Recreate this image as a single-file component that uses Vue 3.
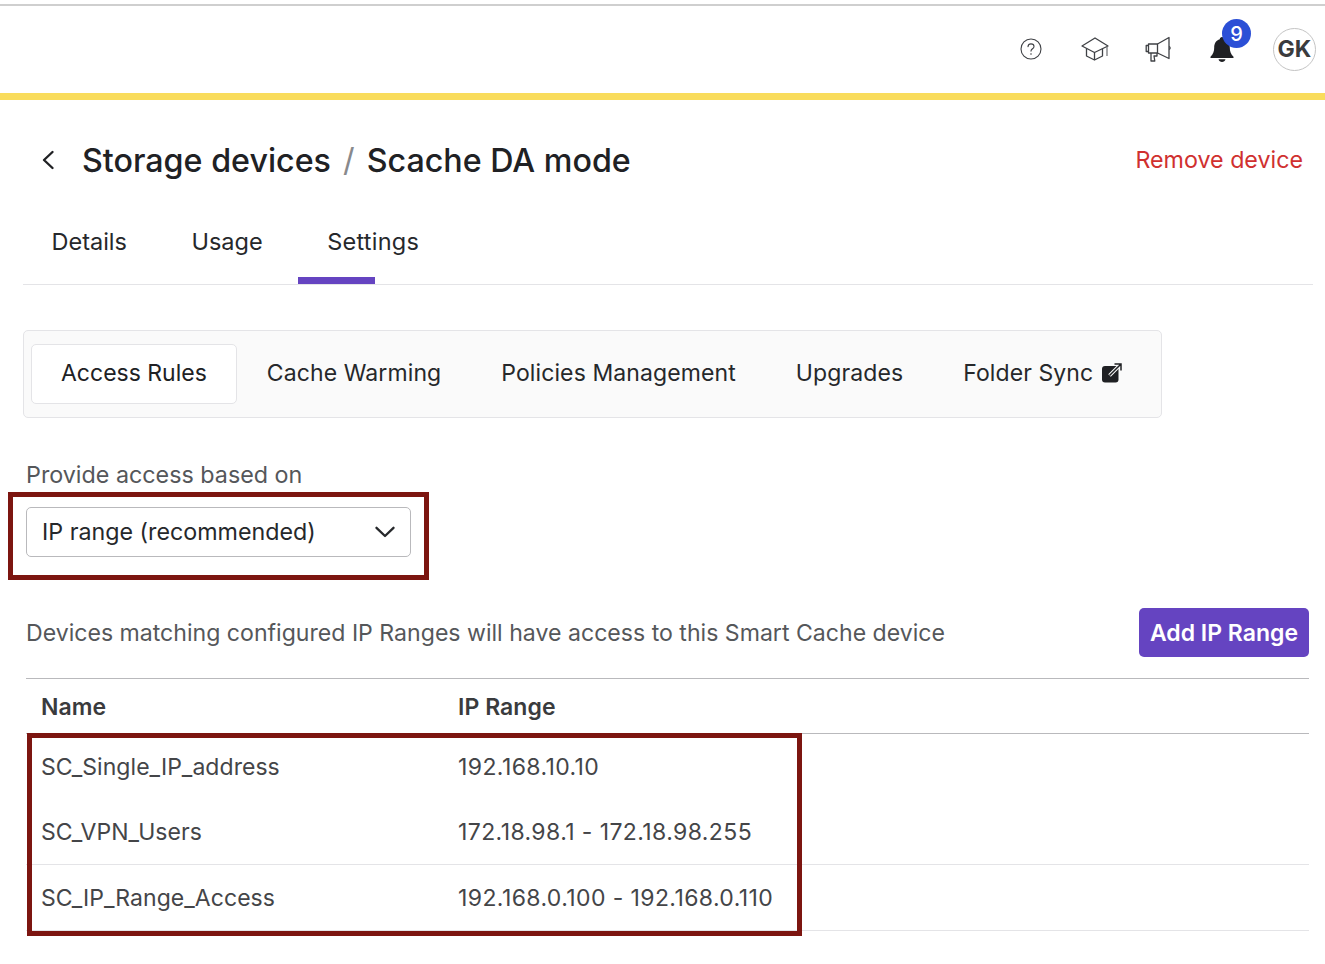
<script setup>
const tabs = [
  { label: 'Details' },
  { label: 'Usage' },
  { label: 'Settings', active: true },
]
const sections = [
  { label: 'Access Rules', active: true },
  { label: 'Cache Warming' },
  { label: 'Policies Management' },
  { label: 'Upgrades' },
  { label: 'Folder Sync', external: true },
]
const rows = [
  { name: 'SC_Single_IP_address', range: '192.168.10.10', plain: true },
  { name: 'SC_VPN_Users', range: '172.18.98.1 - 172.18.98.255' },
  { name: 'SC_IP_Range_Access', range: '192.168.0.100 - 192.168.0.110' },
]
</script>

<template>
  <div class="page">
    <header class="topbar">
      <div class="icons">
        <svg class="ic help" viewBox="0 0 22 22" fill="none" stroke="#3f4145" stroke-width="1.1">
          <circle cx="11" cy="11" r="10" />
          <path d="M8 8.600a3 3 0 0 1 3-2.700c1.800 0 3 1.100 3 2.600 0 2.300-3 2.300-3 4.600" stroke-linecap="round" />
          <circle cx="11" cy="16" r=".8" fill="#3f4145" stroke="none" />
        </svg>
        <svg class="ic cap" viewBox="0 0 28 24" fill="none" stroke="#3f4145" stroke-width="1.300" stroke-linejoin="round">
          <path d="M1 9 14 1 27 9 13.500 15.500Z" />
          <path d="M5.500 11.500V19l8 4 8-4v-7.500" />
          <path d="M13.500 15.500V23" />
          <path d="M26 9.500V19" stroke="#77797c" />
        </svg>
        <svg class="ic mega" viewBox="0 0 26 26" fill="none" stroke="#3f4145" stroke-width="1.300" stroke-linejoin="round">
          <path d="M3.500 8h9v9h-9Z" />
          <path d="M3.500 9.500H1.200v6h2.300" />
          <path d="M12.500 8 24 1.500v21L12.500 17" />
          <path d="M24 10.500c1.500.5 1.500 2.500 0 3" />
          <path d="M6 17v8h3.800l-.8-5h3v-3" />
        </svg>
        <div class="bell-wrap">
          <svg class="ic bell" viewBox="0 0 24 26" fill="#1f2023">
            <path d="M12 1c1.300 0 2.200 1 2.200 2.200C18 4.300 19.800 7.500 19.800 11.500c0 4 1 6.500 3.700 9.200v1.300H.5v-1.300C3.200 18 4.200 15.500 4.200 11.500 4.200 7.500 6 4.300 9.800 3.200 9.800 2 10.700 1 12 1Z" />
            <path d="M8.500 23.300h7C15 25 13.700 26 12 26s-3-1-3.500-2.700Z" />
          </svg>
          <span class="badge">9</span>
        </div>
        <div class="avatar">GK</div>
      </div>
    </header>
    <div class="accent"></div>

    <main class="content">
      <div class="title-row">
        <div class="crumbs">
          <svg class="back" viewBox="0 0 14 20" fill="none" stroke="#202124" stroke-width="2.400" stroke-linecap="round" stroke-linejoin="round">
            <path d="M11.500 2 3 10l8.500 8" />
          </svg>
          <h1 class="title">Storage devices<span class="sep">/</span>Scache DA mode</h1>
        </div>
        <a class="remove">Remove device</a>
      </div>

      <nav class="tabs">
        <span v-for="t in tabs" :key="t.label" class="tab" :class="{ on: t.active }">{{ t.label }}</span>
      </nav>

      <div class="sections">
        <div v-for="s in sections" :key="s.label" class="section" :class="{ active: s.active }">
          <span>{{ s.label }}</span>
          <svg v-if="s.external" class="ext" viewBox="0 0 20 20">
            <rect x="0" y="3" width="16.500" height="16.500" rx="3" fill="#1f2023" />
            <path d="M7.500 12.500 18.500 1.500M12.500 1h6.500v6.500" fill="none" stroke="#fafafa" stroke-width="3.600" />
            <path d="M7.500 12.500 18.500 1.500M12.500 1h6.500v6.500" fill="none" stroke="#1f2023" stroke-width="1.500" />
          </svg>
        </div>
      </div>

      <div class="body">
        <label class="field-label">Provide access based on</label>
        <div class="select-wrap">
          <div class="select">
            <span>IP range (recommended)</span>
            <svg class="chev" viewBox="0 0 20 12" fill="none" stroke="#26282b" stroke-width="2.300" stroke-linecap="round" stroke-linejoin="round">
              <path d="M1.500 1.800 10 10l8.500-8.200" />
            </svg>
          </div>
          <div class="mark mark-select"></div>
        </div>

        <div class="desc-row">
          <p class="desc">Devices matching configured IP Ranges will have access to this Smart Cache device</p>
          <button class="add">Add IP Range</button>
        </div>

        <div class="table">
          <div class="row head">
            <div class="c1">Name</div>
            <div class="c2">IP Range</div>
          </div>
          <div v-for="r in rows" :key="r.name" class="row" :class="{ plain: r.plain }">
            <div class="c1">{{ r.name }}</div>
            <div class="c2 num">{{ r.range }}</div>
          </div>
          <div class="mark mark-table"></div>
        </div>
      </div>
    </main>
  </div>
</template>

<style>
html, body { margin: 0; background: #fff; }
</style>

<style scoped>
.page {
  width: 1325px;
  height: 964px;
  overflow: hidden;
  font-family: Inter, "Liberation Sans", sans-serif;
  color: #202124;
  background: #fff;
  box-sizing: border-box;
  padding-top: 4px;
}
.topbar {
  height: 89px;
  box-sizing: border-box;
  border-top: 2px solid #cfcfcf;
  display: flex;
  justify-content: flex-end;
  align-items: center;
  padding-bottom: 1px;
}
.accent { height: 7px; background: #f9dc5c; }
.icons {
  display: flex;
  align-items: center;
  margin-right: 9px;
}
.ic { display: block; }
.help { width: 22px; height: 22px; margin-right: 39px; }
.cap { width: 28px; height: 24px; margin-right: 36px; }
.mega { width: 26px; height: 26px; margin-right: 39px; }
.bell-wrap { position: relative; width: 24px; height: 26px; margin-right: 39px; }
.bell { width: 24px; height: 26px; }
.badge {
  position: absolute;
  left: 12px;
  top: -17px;
  width: 29px;
  height: 29px;
  border-radius: 50%;
  background: #2b4fd6;
  color: #fff;
  font-size: 20px;
  font-weight: 500;
  display: flex;
  align-items: center;
  justify-content: center;
}
.avatar {
  width: 41px;
  height: 41px;
  border: 1px solid #c4c4c4;
  border-radius: 50%;
  color: #3a3b3d;
  font-size: 23px;
  font-weight: 700;
  display: flex;
  align-items: center;
  justify-content: center;
}
.content { padding: 30px 12px 0 23px; }
.title-row {
  height: 60px;
  display: flex;
  align-items: center;
  justify-content: space-between;
  padding-left: 18px;
  padding-right: 10px;
}
.crumbs { display: flex; align-items: center; }
.back { width: 14px; height: 20px; margin-right: 27px; display: block; }
.title {
  margin: 2px 0 0;
  font-size: 32.250px;
  line-height: 40px;
  font-weight: 500;
  color: #202124;
}
.sep { color: #88898c; font-weight: 400; margin: 0 12px; }
.remove { font-size: 23.250px; color: #d0302f; margin-top: -2px; }
.tabs {
  margin-top: 10px;
  height: 84px;
  border-bottom: 1px solid #e4e4e7;
  display: flex;
  align-items: center;
  padding-left: 28.500px;
  gap: 64.500px;
}
.tab { position: relative; font-size: 23.500px; color: #26282b; line-height: 30px; }
.tab.on { letter-spacing: 0.25px; }
.tab.on::after {
  content: "";
  position: absolute;
  left: -29px;
  width: 77px;
  top: 50px;
  height: 7px;
  background: #6544c1;
}
.sections {
  margin-top: 45px;
  width: 1139px;
  height: 88px;
  box-sizing: border-box;
  background: #fafafa;
  border: 1px solid #e4e4e7;
  border-radius: 5px;
  padding: 13px 7px;
  display: flex;
  align-items: stretch;
}
.section {
  display: flex;
  align-items: center;
  padding: 0 29px 2px;
  font-size: 23px;
  letter-spacing: 0.1px;
  color: #26282b;
  border: 1px solid transparent;
  border-radius: 5px;
  box-sizing: border-box;
}
.section.active { background: #fff; border-color: #e4e4e7; color: #202124; letter-spacing: 0; }
.ext { width: 20px; height: 20px; margin-left: 9px; }
.body { padding-left: 3px; }
.field-label {
  display: block;
  margin-top: 42px;
  font-size: 23.300px;
  line-height: 30px;
  color: #55575a;
}
.select-wrap { position: relative; margin-top: 17px; width: 385px; }
.select {
  height: 50px;
  box-sizing: border-box;
  border: 1px solid #b9b9bc;
  border-radius: 5px;
  display: flex;
  align-items: center;
  justify-content: space-between;
  padding: 0 15px 2px;
  font-size: 23.250px;
  color: #26282b;
}
.chev { width: 20px; height: 12px; display: block; margin-top: 2px; }
.mark { position: absolute; border: 5px solid #7c1510; box-sizing: border-box; pointer-events: none; }
.mark-select { left: -18px; top: -15px; width: 421px; height: 88px; }
.desc-row {
  margin-top: 51px;
  display: flex;
  justify-content: space-between;
  align-items: center;
  height: 49px;
  width: 1283px;
}
.desc { margin: 0; font-size: 23.100px; color: #55575a; }
.add {
  width: 170px;
  height: 49px;
  background: #6544c1;
  color: #fff;
  border: 0;
  border-radius: 5px;
  font-family: inherit;
  font-size: 23px;
  font-weight: 600;
  padding: 0;
}
.table {
  position: relative;
  margin-top: 21px;
  width: 1283px;
  border-top: 1px solid #b9b9bc;
}
.row {
  display: flex;
  align-items: center;
  height: 65px;
  border-bottom: 1px solid #e4e4e7;
  font-size: 23px;
  letter-spacing: 0.05px;
  color: #444548;
  box-sizing: border-box;
  padding-top: 1px;
}
.row.head { height: 55px; font-weight: 600; border-bottom-color: #b9b9bc; color: #3a3b3d; }
.row.plain { border-bottom-color: transparent; }
.row:nth-child(3), .row:nth-child(4) { height: 66px; padding-top: 0; }
.c1 { width: 432px; padding-left: 15px; box-sizing: border-box; }
.c2 { flex: 1; }
.num { letter-spacing: 0.4px; }
.mark-table { left: 1px; top: 54px; width: 775px; height: 203px; }
</style>
